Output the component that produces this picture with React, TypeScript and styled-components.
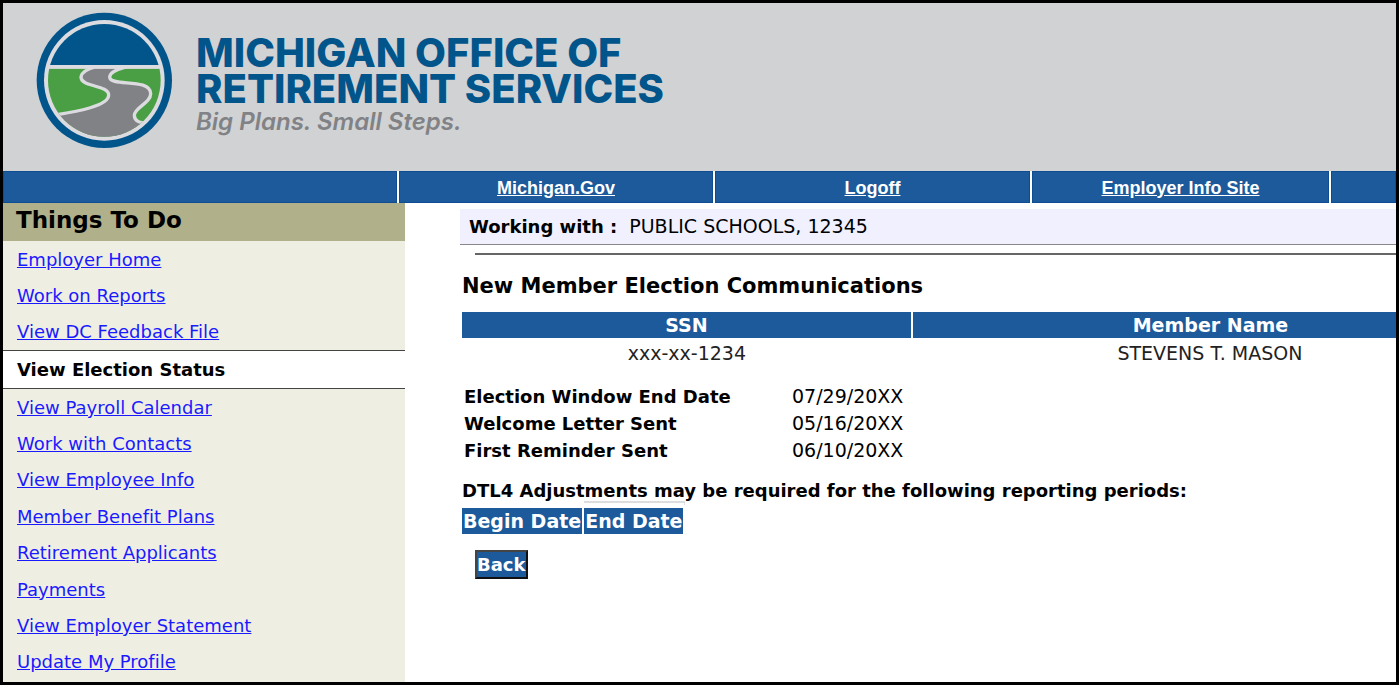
import React from "react";
import styled, { createGlobalStyle } from "styled-components";

const GlobalStyle = createGlobalStyle`
  *, *::before, *::after { box-sizing: border-box; }
  body {
    margin: 0;
    background: #fff;
    color: #000;
    font-family: "DejaVu Sans", Verdana, sans-serif;
    font-size: 18px;
    font-variant-ligatures: none;
  }
`;

const Page = styled.div`
  display: flex;
  flex-direction: column;
  min-height: 100vh;
  border: 3px solid #000;
  overflow: hidden;
`;

const Header = styled.header`
  display: flex;
  align-items: flex-start;
  gap: 23px;
  height: 168px;
  padding: 9px 33px;
  background: #d1d2d4;
`;

const Emblem = styled.svg`
  flex: none;
  width: 137px;
  height: 137px;
`;

const Brand = styled.div`
  padding-top: 23px;
  font-family: Inter, sans-serif;
  white-space: nowrap;
`;

const BrandName = styled.div`
  color: #02558b;
  font-size: 40px;
  font-weight: 800;
  line-height: 36px;
`;

const Tagline = styled.div`
  color: #818286;
  font-size: 24px;
  font-style: italic;
  font-weight: 600;
  line-height: 30px;
`;

const NavBar = styled.nav`
  display: grid;
  grid-template-columns: 394fr 314fr 315fr 297fr 65fr;
  gap: 2px;
  height: 32px;
  background: #fff;
`;

const NavCell = styled.div`
  display: flex;
  align-items: center;
  justify-content: center;
  padding-top: 1px;
  background: #1c5a9b;
  border: 1px solid #0f4d92;
`;

const NavLink = styled.a`
  color: #fff;
  font-family: "Liberation Sans", Arial, sans-serif;
  font-size: 18px;
  font-weight: 700;
  line-height: 20px;
`;

const Body = styled.div`
  display: flex;
  flex: 1;
`;

const Sidebar = styled.aside`
  display: flex;
  flex-direction: column;
  flex: none;
  width: 402px;
  padding-bottom: 2px;
  background: #eeeee2;
`;

const SidebarTitle = styled.h2`
  margin: 0;
  height: 38px;
  padding: 0 13px;
  background: #b0b08a;
  font-size: 23px;
  line-height: 34px;
`;

const Menu = styled.ul`
  display: flex;
  flex: 1;
  flex-direction: column;
  margin: 0;
  padding: 0;
  list-style: none;
`;

const MenuItem = styled.li<{ $current?: boolean }>`
  display: flex;
  align-items: center;
  flex: ${(p) => (p.$current ? "none" : "1 0 36px")};
  height: ${(p) => (p.$current ? "39px" : "auto")};
  padding: 0 14px;
  background: ${(p) => (p.$current ? "#fff" : "transparent")};
  border: solid #444;
  border-width: ${(p) => (p.$current ? "1px 0" : "0")};
  font-weight: ${(p) => (p.$current ? 700 : 400)};
`;

const MenuLink = styled.a`
  color: #1a1aff;
`;

const Main = styled.main`
  flex: 1;
  min-width: 0;
  padding: 6px 0 0 55px;
  overflow: hidden;
`;

const WorkingBar = styled.div`
  display: flex;
  gap: 12px;
  height: 36px;
  padding: 0 9px;
  background: #f0f0ff;
  border-bottom: 1px solid #888;
  line-height: 35px;
`;

const WorkingValue = styled.span`
  font-size: 19px;
`;

const Rule = styled.hr`
  height: 2px;
  margin: 8px 0 0 15px;
  border: 0;
  background: #666;
`;

const Section = styled.section`
  padding-left: 2px;
`;

const Title = styled.h1`
  margin: 16px 0 11px;
  font-size: 21px;
  line-height: 30px;
`;

const MemberTable = styled.table`
  width: 112%;
  table-layout: fixed;
  border-collapse: collapse;
`;

const HeadCell = styled.th<{ $width?: string; $edge?: boolean }>`
  position: relative;
  width: ${(p) => p.$width || "auto"};
  height: 26px;
  padding: 0 1px;
  background: #1c5a9b;
  background-clip: padding-box;
  color: #fff;
  font-size: 19px;
  line-height: 26px;
  white-space: nowrap;

  & + & {
    border-left: 2px solid #fff;
  }

  &::before {
    content: "";
    display: ${(p) => (p.$edge ? "block" : "none")};
    position: absolute;
    top: -7px;
    left: 0;
    right: -2px;
    height: 4px;
    border: solid #ddd;
    border-width: 2px 1px 0 0;
  }
`;

const MemberCell = styled.td`
  padding: 0;
  color: #222;
  font-size: 19px;
  line-height: 30px;
  text-align: center;
`;

const Details = styled.dl`
  display: grid;
  grid-template-columns: 328px 1fr;
  margin: 15px 0 0;
  padding-left: 2px;
  line-height: 27px;
`;

const Term = styled.dt`
  font-weight: 700;
`;

const Value = styled.dd`
  margin: 0;
  font-size: 19px;
`;

const Notice = styled.p`
  margin: 13px 0 3px;
  font-weight: 700;
  line-height: 28px;
`;

const PeriodTable = styled.table`
  border-collapse: collapse;
`;

const BackButton = styled.button`
  display: block;
  height: 29px;
  margin: 16px 0 0 13px;
  padding: 0;
  background: #1c5a9b;
  border: 2px solid;
  border-color: #444 #111 #111 #444;
  color: #fff;
  font: 700 18px/25px "DejaVu Sans", Verdana, sans-serif;
`;

const navLinks = ["", "Michigan.Gov", "Logoff", "Employer Info Site", ""];

const menuItems = [
  "Employer Home",
  "Work on Reports",
  "View DC Feedback File",
  "View Election Status",
  "View Payroll Calendar",
  "Work with Contacts",
  "View Employee Info",
  "Member Benefit Plans",
  "Retirement Applicants",
  "Payments",
  "View Employer Statement",
  "Update My Profile",
];

const currentItem = "View Election Status";

const details = [
  ["Election Window End Date", "07/29/20XX"],
  ["Welcome Letter Sent", "05/16/20XX"],
  ["First Reminder Sent", "06/10/20XX"],
];

function RoadEmblem() {
  return (
    <Emblem viewBox="108 36 411 411" role="img" aria-label="Road to the horizon">
      <defs>
        <clipPath id="disc">
          <circle cx="313" cy="241" r="169" />
        </clipPath>
      </defs>
      <circle cx="313" cy="241" r="203" fill="#02558b" />
      <circle cx="313" cy="241" r="181" fill="#dcdce0" />
      <g clipPath="url(#disc)">
        <rect x="140" y="60" width="350" height="135" fill="#02558b" />
        <rect x="140" y="206" width="350" height="220" fill="#4a9f45" />
        <path
          d="M286 201 C262 207 244 217 243 232 C243 262 326 254 326 285 C326 318 232 334 166 345 L180 430 L400 440 L440 366 C420 372 403 362 403 346 C403 322 452 310 452 281 C452 232 329 262 329 231 C330 216 350 209 378 201 Z"
          fill="#818285"
          stroke="#dcdce0"
          strokeWidth="10"
          strokeLinejoin="round"
        />
        <rect x="140" y="195" width="350" height="11" fill="#dcdce0" />
      </g>
    </Emblem>
  );
}

export default function App() {
  return (
    <>
      <GlobalStyle />
      <Page>
        <Header>
          <RoadEmblem />
          <Brand>
            <BrandName>
              MICHIGAN OFFICE OF
              <br />
              RETIREMENT SERVICES
            </BrandName>
            <Tagline>Big Plans. Small Steps.</Tagline>
          </Brand>
        </Header>
        <NavBar>
          {navLinks.map((label, i) => (
            <NavCell key={i}>{label && <NavLink href="#">{label}</NavLink>}</NavCell>
          ))}
        </NavBar>
        <Body>
          <Sidebar>
            <SidebarTitle>Things To Do</SidebarTitle>
            <Menu>
              {menuItems.map((label) => (
                <MenuItem key={label} $current={label === currentItem}>
                  {label === currentItem ? label : <MenuLink href="#">{label}</MenuLink>}
                </MenuItem>
              ))}
            </Menu>
          </Sidebar>
          <Main>
            <WorkingBar>
              <strong>Working with :</strong>
              <WorkingValue>PUBLIC SCHOOLS, 12345</WorkingValue>
            </WorkingBar>
            <Rule />
            <Section>
              <Title>New Member Election Communications</Title>
              <MemberTable>
                <thead>
                  <tr>
                    <HeadCell $width="43%">SSN</HeadCell>
                    <HeadCell>Member Name</HeadCell>
                  </tr>
                </thead>
                <tbody>
                  <tr>
                    <MemberCell>xxx-xx-1234</MemberCell>
                    <MemberCell>STEVENS T. MASON</MemberCell>
                  </tr>
                </tbody>
              </MemberTable>
              <Details>
                {details.map(([term, value]) => (
                  <React.Fragment key={term}>
                    <Term>{term}</Term>
                    <Value>{value}</Value>
                  </React.Fragment>
                ))}
              </Details>
              <Notice>DTL4 Adjustments may be required for the following reporting periods:</Notice>
              <PeriodTable>
                <thead>
                  <tr>
                    <HeadCell>Begin Date</HeadCell>
                    <HeadCell $edge>End Date</HeadCell>
                  </tr>
                </thead>
              </PeriodTable>
              <BackButton type="button">Back</BackButton>
            </Section>
          </Main>
        </Body>
      </Page>
    </>
  );
}
